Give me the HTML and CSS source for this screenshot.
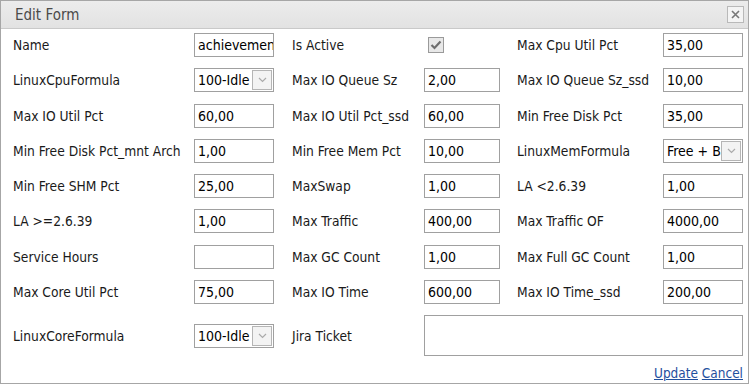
FILE: index.html
```html
<html>
	<head>
		<title>Edit Form</title>
		<link rel="stylesheet" href="styles.css">
	</head>
	<body>
	<div class="dialog">
		<div class="titlebar">
			<span class="title">Edit Form</span>
			<span class="close">
				<svg width="9" height="9" viewBox="0 0 9 9"><path d="M1 1 L8 8 M8 1 L1 8" stroke="#777" stroke-width="1.6"/></svg>
			</span>
		</div>
		<div class="form">
			<div class="label">Name</div>
			<div class="cell"><div class="field">achievement</div></div>
			<div class="label">Is Active</div>
			<div class="cell"><span class="check"><svg width="12" height="10" viewBox="0 0 12 10"><path d="M1.5 5 L4.5 8 L10.5 1.5" fill="none" stroke="#6e6e6e" stroke-width="2.2"/></svg></span></div>
			<div class="label">Max Cpu Util Pct</div>
			<div class="cell"><div class="field">35,00</div></div>

			<div class="label">LinuxCpuFormula</div>
			<div class="cell"><div class="field combo"><span class="combo-text">100-Idle</span><span class="arrow"><svg width="9" height="6" viewBox="0 0 9 6"><path d="M1 1 L4.5 4.5 L8 1" fill="none" stroke="#aaa" stroke-width="1.2"/></svg></span></div></div>
			<div class="label">Max IO Queue Sz</div>
			<div class="cell"><div class="field short">2,00</div></div>
			<div class="label">Max IO Queue Sz_ssd</div>
			<div class="cell"><div class="field">10,00</div></div>

			<div class="label">Max IO Util Pct</div>
			<div class="cell"><div class="field">60,00</div></div>
			<div class="label">Max IO Util Pct_ssd</div>
			<div class="cell"><div class="field short">60,00</div></div>
			<div class="label">Min Free Disk Pct</div>
			<div class="cell"><div class="field">35,00</div></div>

			<div class="label">Min Free Disk Pct_mnt Arch</div>
			<div class="cell"><div class="field">1,00</div></div>
			<div class="label">Min Free Mem Pct</div>
			<div class="cell"><div class="field short">10,00</div></div>
			<div class="label">LinuxMemFormula</div>
			<div class="cell"><div class="field combo"><span class="combo-text">Free + Buffers</span><span class="arrow"><svg width="9" height="6" viewBox="0 0 9 6"><path d="M1 1 L4.5 4.5 L8 1" fill="none" stroke="#aaa" stroke-width="1.2"/></svg></span></div></div>

			<div class="label">Min Free SHM Pct</div>
			<div class="cell"><div class="field">25,00</div></div>
			<div class="label">MaxSwap</div>
			<div class="cell"><div class="field short">1,00</div></div>
			<div class="label">LA &lt;2.6.39</div>
			<div class="cell"><div class="field">1,00</div></div>

			<div class="label">LA &gt;=2.6.39</div>
			<div class="cell"><div class="field">1,00</div></div>
			<div class="label">Max Traffic</div>
			<div class="cell"><div class="field short">400,00</div></div>
			<div class="label">Max Traffic OF</div>
			<div class="cell"><div class="field">4000,00</div></div>

			<div class="label">Service Hours</div>
			<div class="cell"><div class="field"></div></div>
			<div class="label">Max GC Count</div>
			<div class="cell"><div class="field short">1,00</div></div>
			<div class="label">Max Full GC Count</div>
			<div class="cell"><div class="field">1,00</div></div>

			<div class="label">Max Core Util Pct</div>
			<div class="cell"><div class="field">75,00</div></div>
			<div class="label">Max IO Time</div>
			<div class="cell"><div class="field short">600,00</div></div>
			<div class="label">Max IO Time_ssd</div>
			<div class="cell"><div class="field">200,00</div></div>

			<div class="label">LinuxCoreFormula</div>
			<div class="cell"><div class="field combo"><span class="combo-text">100-Idle</span><span class="arrow"><svg width="9" height="6" viewBox="0 0 9 6"><path d="M1 1 L4.5 4.5 L8 1" fill="none" stroke="#aaa" stroke-width="1.2"/></svg></span></div></div>
			<div class="label">Jira Ticket</div>
			<div class="cell wide"><div class="textarea"></div></div>
		</div>
		<div class="actions">
			<a href="#">Update</a> <a href="#">Cancel</a>
		</div>
	</div>
	</body>
</html>
```

FILE: styles.css
```css
body{
	margin: 0;
	background: #ffffff;
	font-family: "DejaVu Sans Condensed", "DejaVu Sans", sans-serif;
	color: #1a1a1a;
}
.dialog{
	width: 749px;
	height: 384px;
	box-sizing: border-box;
	border: 1px solid #a6a6a6;
	background: #ffffff;
}
.titlebar{
	height: 27px;
	border-bottom: 1px solid #c9c9c9;
	background: linear-gradient(#ececec, #e2e2e2);
	display: flex;
	align-items: center;
	justify-content: space-between;
	padding: 0 4px 0 14px;
}
.title{
	font-size: 15px;
	color: #4a4a4a;
}
.close{
	width: 15px;
	height: 15px;
	border: 1px solid #b9b9b9;
	background: #f4f4f4;
	display: flex;
	align-items: center;
	justify-content: center;
}
.form{
	display: grid;
	grid-template-columns: 181px 98px 132px 93px 146px 80px;
	grid-template-rows: repeat(8, 24px) 41px;
	row-gap: 11.3px;
	padding: 4px 0 0 12px;
	font-size: 13.7px;
}
.label{
	display: flex;
	align-items: center;
	white-space: nowrap;
}
.cell{
	display: flex;
	align-items: center;
}
.cell.wide{
	grid-column: 4 / 7;
}
.field{
	width: 80px;
	height: 24px;
	box-sizing: border-box;
	border: 1px solid #a0a0a0;
	padding: 0 3px;
	font-size: 14px;
	line-height: 22px;
	color: #000;
	white-space: nowrap;
	overflow: hidden;
}
.field.short{
	width: 76px;
}
.combo{
	display: flex;
	align-items: center;
	padding: 0 1px 0 3px;
}
.combo-text{
	flex: 1;
	overflow: hidden;
}
.arrow{
	width: 20px;
	height: 20px;
	box-sizing: border-box;
	border: 1px solid #b5b5b5;
	background: #f3f3f3;
	display: flex;
	align-items: center;
	justify-content: center;
	flex-shrink: 0;
}
.check{
	width: 16px;
	height: 16px;
	box-sizing: border-box;
	margin-left: 4px;
	border: 1px solid #9a9a9a;
	background: #e8e8e8;
	display: flex;
	align-items: center;
	justify-content: center;
}
.textarea{
	width: 320px;
	height: 41px;
	box-sizing: border-box;
	border: 1px solid #a0a0a0;
}
.actions{
	text-align: right;
	padding: 9px 5px 0 0;
	font-size: 13.5px;
}
.actions a{
	color: #1f4f9e;
}
```
